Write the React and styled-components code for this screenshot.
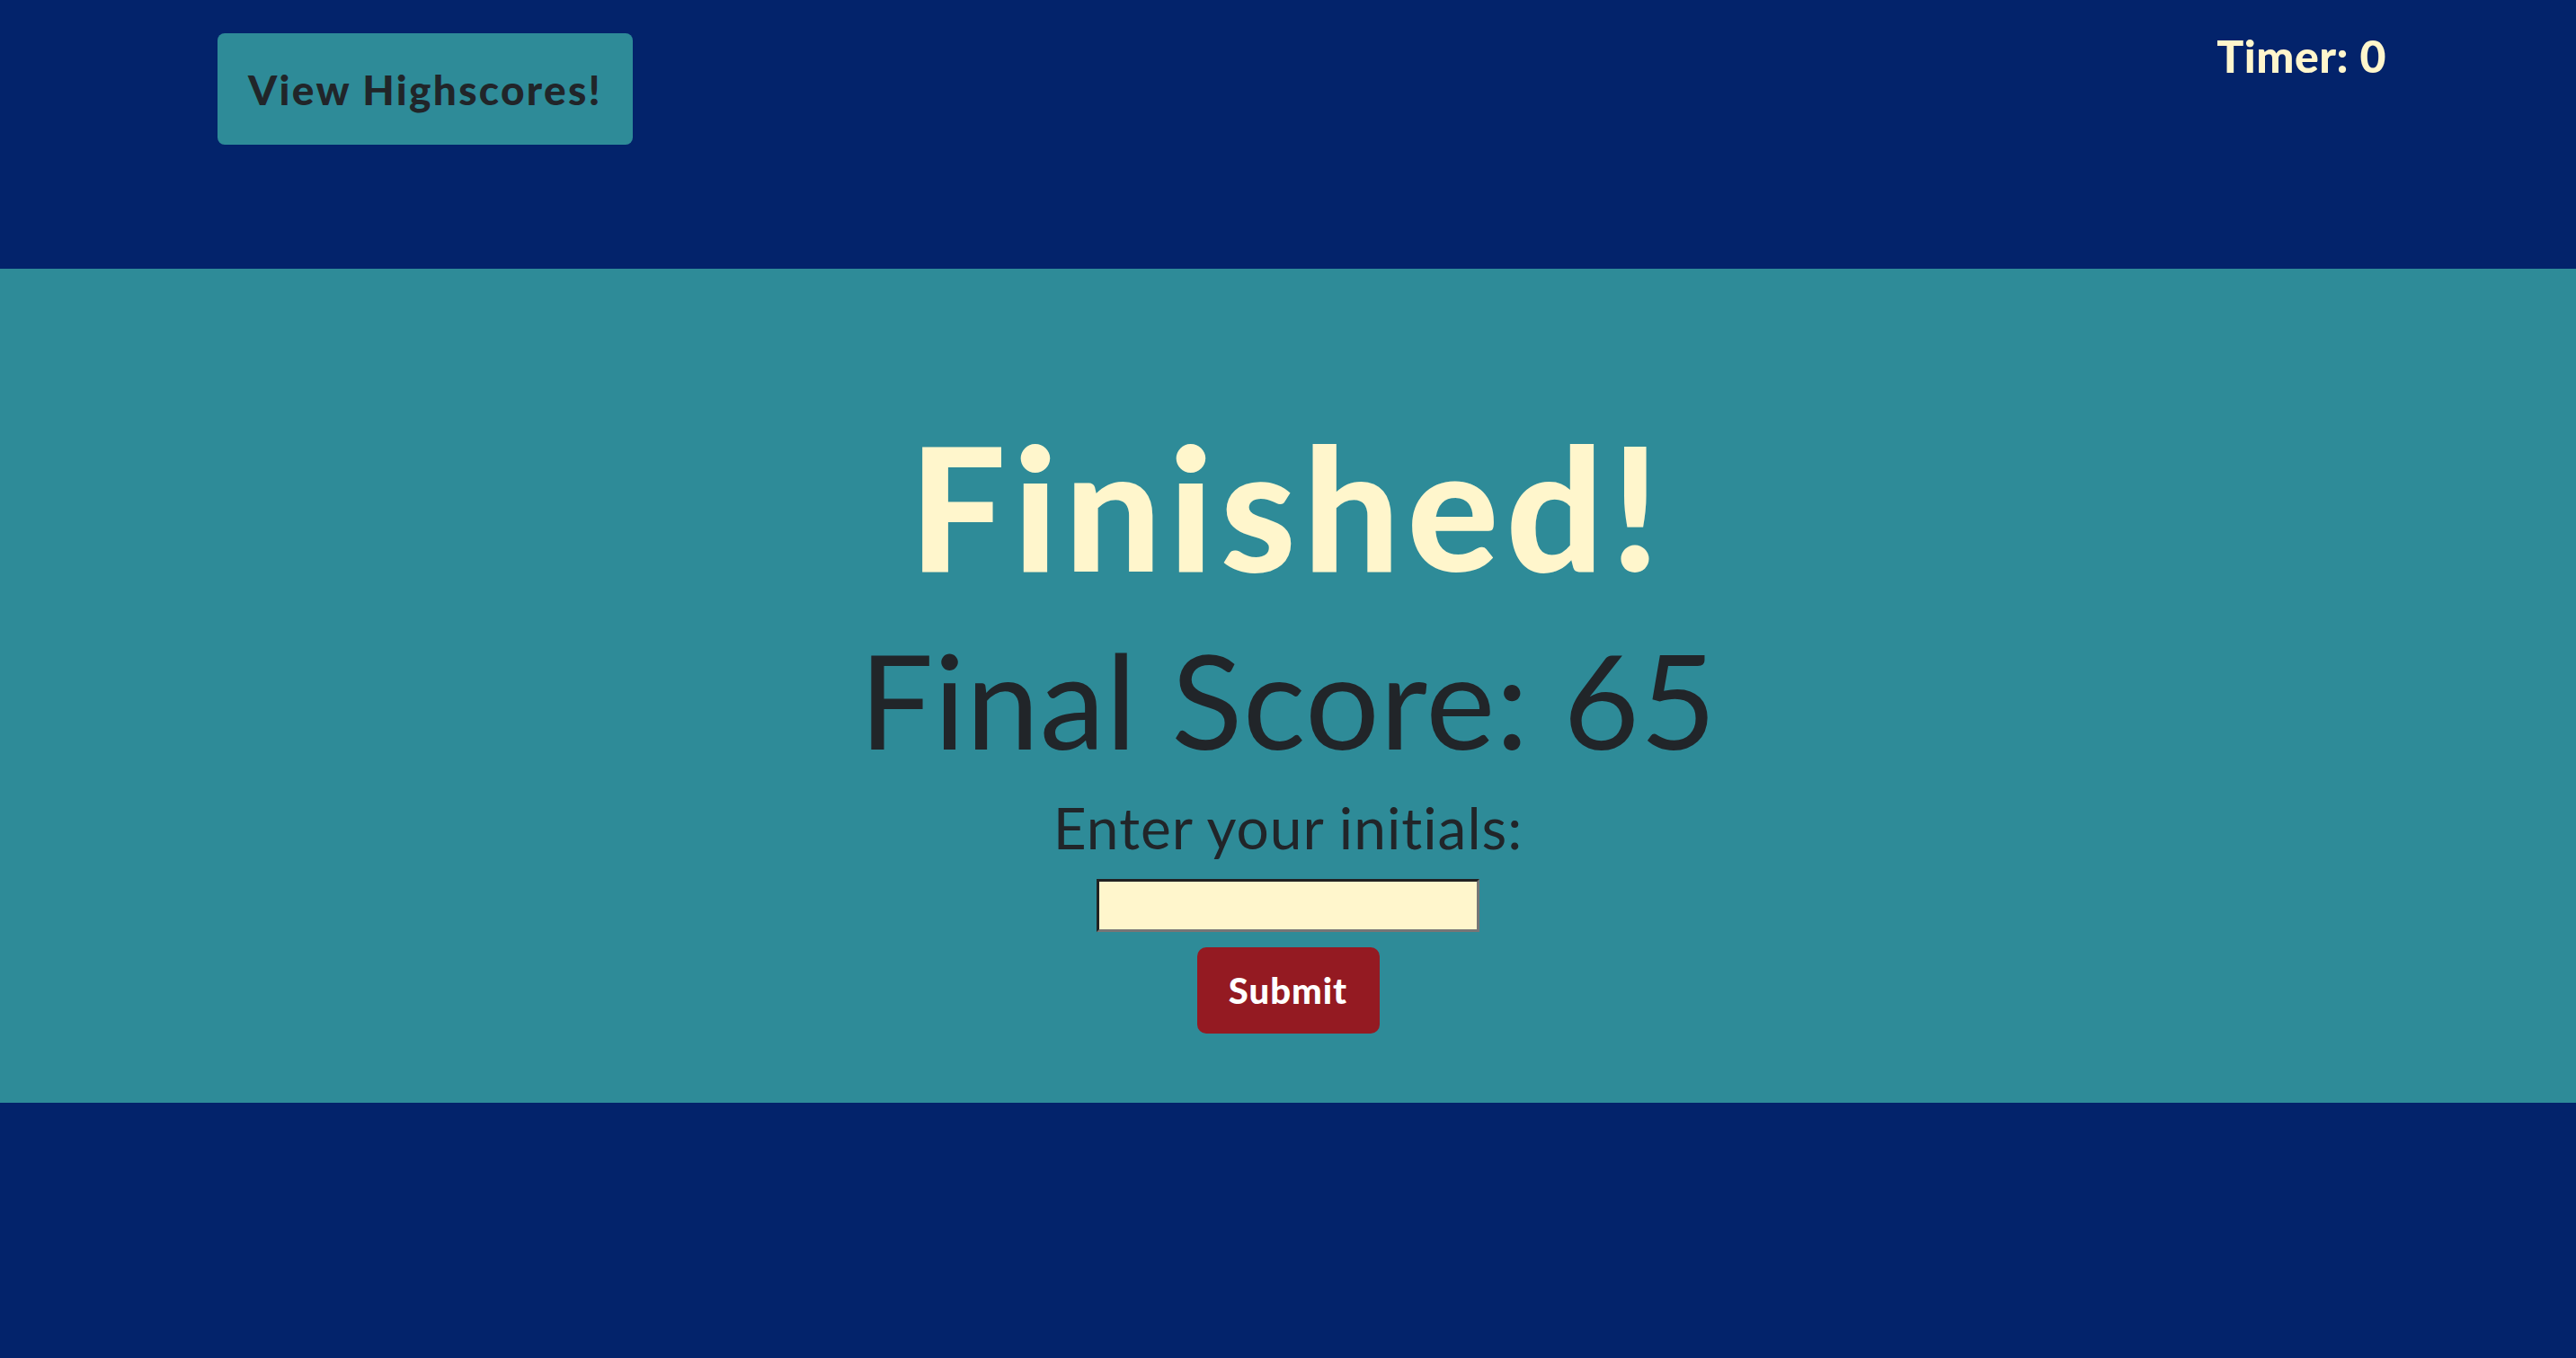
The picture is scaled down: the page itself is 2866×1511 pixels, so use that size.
import React from "react";
import styled, { createGlobalStyle } from "styled-components";

const Global = createGlobalStyle`
  html, body { margin: 0; padding: 0; }
  body {
    background: #03236b;
    font-family: Lato, "Open Sans", sans-serif;
    color: #212529;
    min-height: 1511px;
  }
`;

const Header = styled.header`
  height: 299px;
  box-sizing: border-box;
  padding: 37px 211px 0 242px;
  display: flex;
  justify-content: space-between;
  align-items: flex-start;
`;

const HighscoreButton = styled.button`
  width: 462px;
  height: 124px;
  border: none;
  border-radius: 8px;
  background: #2e8b98;
  color: #212529;
  font-family: Lato, sans-serif;
  font-weight: 900;
  font-size: 46px;
  letter-spacing: 2.3px;
  padding: 0;
  cursor: pointer;
`;

const Timer = styled.div`
  color: #fff6cc;
  font-weight: 900;
  font-size: 50px;
  line-height: 1;
  letter-spacing: 0.5px;
`;

const Band = styled.main`
  height: 928px;
  box-sizing: border-box;
  background: #2e8b98;
  padding-top: 168px;
  display: flex;
  flex-direction: column;
  align-items: center;
`;

const Title = styled.h1`
  margin: 0;
  font-size: 190px;
  line-height: 1;
  font-weight: 900;
  letter-spacing: 8px;
  color: #fff6cc;
`;

const Score = styled.h2`
  margin: 48px 0 0;
  font-size: 146px;
  line-height: 1;
  font-weight: 400;
  letter-spacing: 0.7px;
  color: #212529;
`;

const Label = styled.label`
  margin-top: 38px;
  font-size: 64px;
  line-height: 1;
  letter-spacing: 1px;
  color: #212529;
`;

const Initials = styled.input`
  margin-top: 25px;
  width: 426px;
  height: 59px;
  box-sizing: border-box;
  background: #fff6cc;
  border-width: 3px;
  border-style: solid;
  border-top-color: #222;
  border-left-color: #222;
  border-right-color: #767676;
  border-bottom-color: #767676;
  padding: 0 8px;
  font-size: 32px;
  outline: none;
`;

const SubmitButton = styled.button`
  margin-top: 17px;
  width: 203px;
  height: 96px;
  border: none;
  border-radius: 10px;
  background: #941a22;
  color: #ffffff;
  font-family: Lato, sans-serif;
  font-weight: 900;
  font-size: 40px;
  letter-spacing: 1px;
  padding: 0;
  cursor: pointer;
`;

export default function App() {
  return (
    <>
      <Global />
      <Header>
        <HighscoreButton>View Highscores!</HighscoreButton>
        <Timer>Timer: 0</Timer>
      </Header>
      <Band>
        <Title>Finished!</Title>
        <Score>Final Score: 65</Score>
        <Label htmlFor="initials">Enter your initials:</Label>
        <Initials id="initials" type="text" />
        <SubmitButton>Submit</SubmitButton>
      </Band>
    </>
  );
}
